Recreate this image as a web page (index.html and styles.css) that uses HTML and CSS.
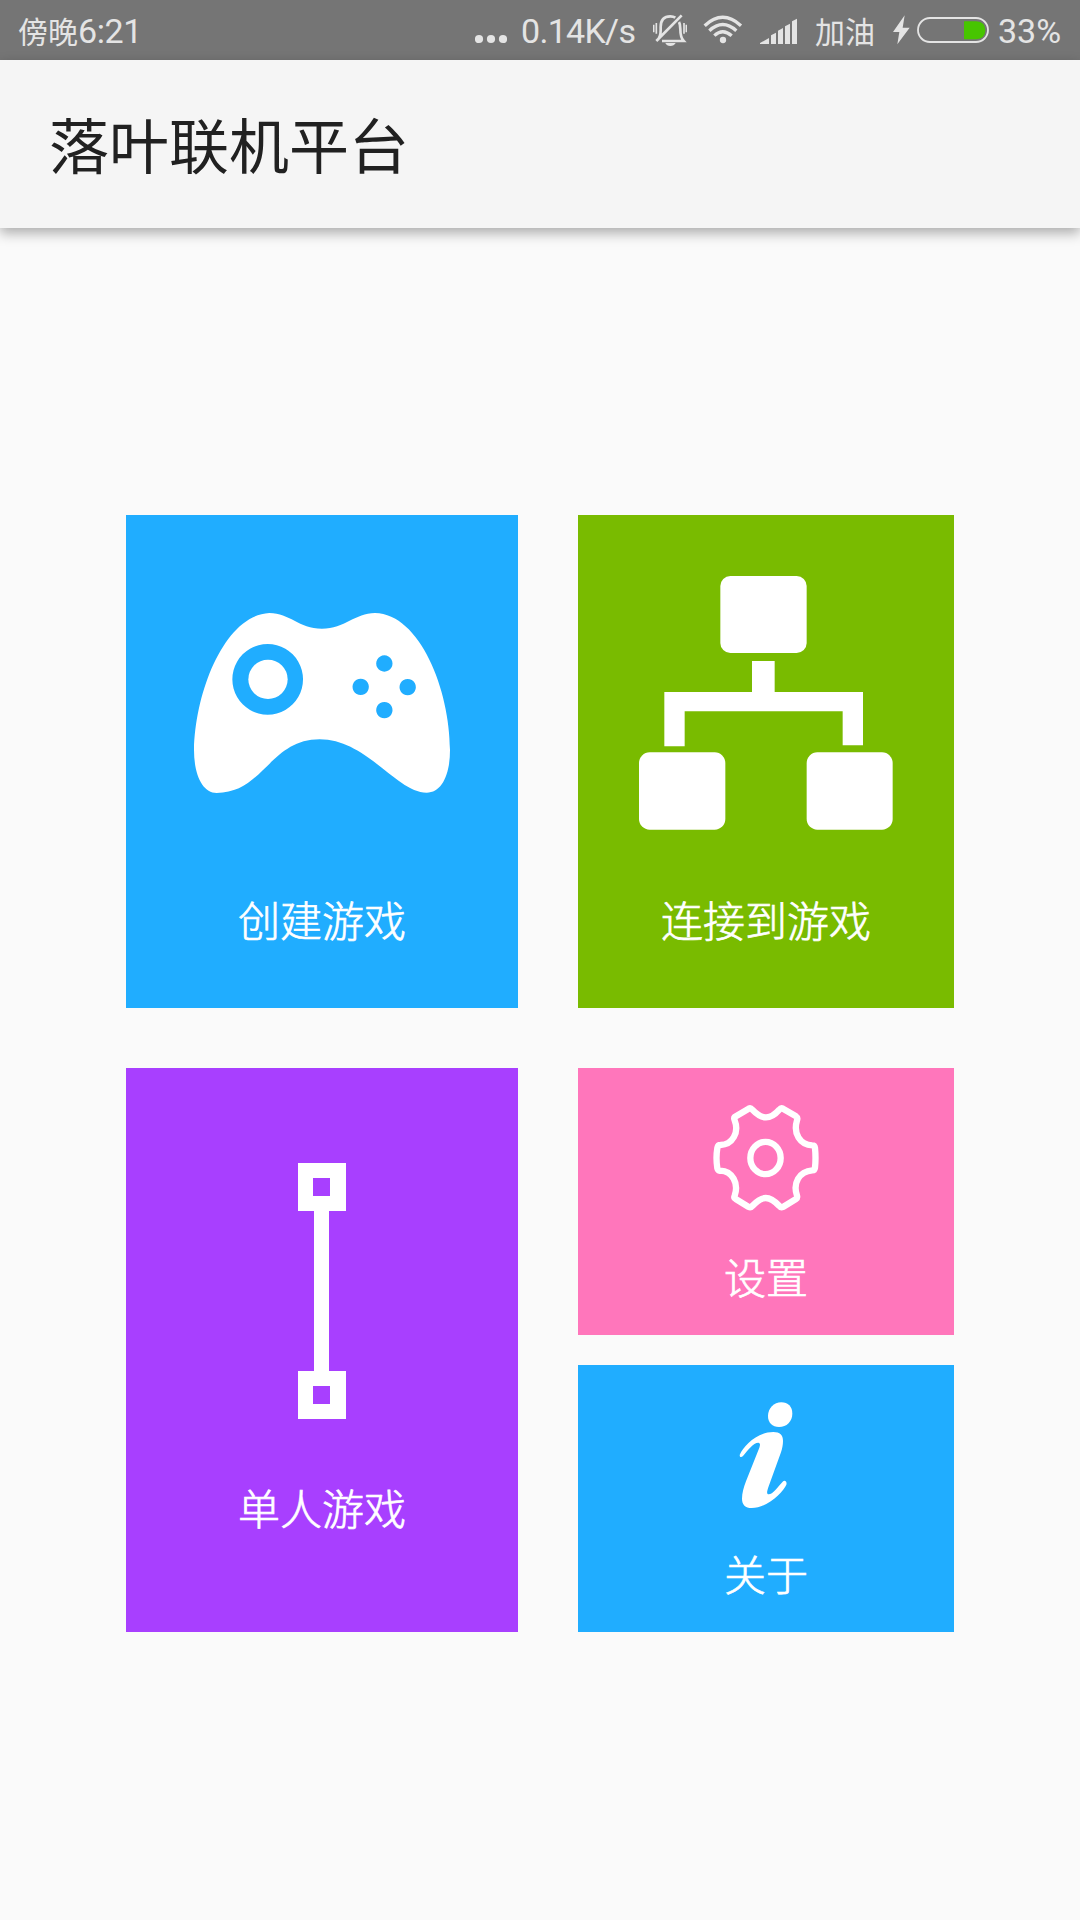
FILE: index.html
```html
<!DOCTYPE html>
<html lang="zh-CN">
<head>
<meta charset="utf-8">
<title>落叶联机平台</title>
<link rel="stylesheet" href="styles.css">
</head>
<body>
<header class="status">
  <div class="clock"><span class="han">傍晚</span><span>6:21</span></div>
  <svg class="dots" viewBox="0 0 32 10"><circle cx="4" cy="5" r="4.1"/><circle cx="16" cy="5" r="4.1"/><circle cx="28" cy="5" r="4.1"/></svg>
  <span class="speed">0.14K/s</span>
  <svg class="bell" viewBox="579 39 102 99">
    <path d="M581 71v23M589 66v32M672 66v32M679 71v23" fill="none" stroke="#e4e4e4" stroke-width="5"/>
    <path d="M594 116Q602 106 602 88V78Q602 46 631 46Q640 46 646 50M657 63Q661 70 661 84Q661 109 671 120H606M589 120L665 43" fill="none" stroke="#e4e4e4" stroke-width="8"/>
    <path d="M616 126H647Q642 135 631 135T616 126Z"/>
  </svg>
  <svg class="wifi" viewBox="729 45 120 87">
    <g fill="none" stroke="#e4e4e4" stroke-width="10"><path d="M734 77Q788 27 843 77M748 92Q788 55 829 92M763 107Q788 83 815 107"/></g>
    <circle cx="789" cy="120" r="9.5"/>
  </svg>
  <svg class="signal" viewBox="0 51 111 81"><path d="M0 129V126L27 111V129ZM33 129V103L48 95V129ZM54 129V89L69 81V129ZM75 129V76L90 68V129ZM96 129V61L111 53V129Z"/></svg>
  <span class="han carrier">加油</span>
  <svg class="bolt" viewBox="399 45 51 90"><path d="M434 46L399 96H418L412 133L449 83H428Z"/></svg>
  <svg class="battery" viewBox="471 51 216 78">
    <rect x="474" y="54" width="210" height="72" rx="36" fill="none" stroke="#e4e4e4" stroke-width="5.5"/>
    <path class="charge" d="M612 64H649Q676 66 676 90.500T649 118H612Z"/>
  </svg>
  <span class="percent">33%</span>
</header>
<div class="appbar"><h1>落叶联机平台</h1></div>
<main class="tiles">
  <a class="tile create">
    <svg class="icon" viewBox="252 225 768 768">
      <path fill-rule="evenodd" d="M478 339C540 339 565 386 636 386C705 386 735 339 795 339C930 342 1020 570 1020 750C1020 825 995 878 950 878C860 878 770 718 629 718C480 718 460 879 320 879C278 879 252 825 252 750C256 570 346 345 478 339ZM473 432a106 106 0 1 0 .1 0ZM823 466a24.500 24.500 0 1 0 .1 0ZM752 536a24.500 24.500 0 1 0 .1 0ZM893 537a24.500 24.500 0 1 0 .1 0ZM823 606a24.500 24.500 0 1 0 .1 0Z"/>
      <circle cx="474" cy="538" r="59"/>
    </svg>
    <span class="label">创建游戏</span>
  </a>
  <a class="tile join">
    <svg class="icon" viewBox="234 225 768 768">
      <rect x="481" y="228" width="259" height="231" rx="30"/>
      <rect x="237" y="757" width="259" height="232" rx="32"/>
      <rect x="740" y="757" width="258" height="232" rx="32"/>
      <path d="M576 483H644V576H909V736H848V634H374V739H313V576H576Z"/>
    </svg>
    <span class="label">连接到游戏</span>
  </a>
  <a class="tile single">
    <svg class="icon" viewBox="0 0 256 256"><path fill-rule="evenodd" d="M104 0H152V48H135V208H152V256H104V208H120V48H104ZM119 15V33H136V15ZM119 223V241H136V223Z"/></svg>
    <span class="label">单人游戏</span>
  </a>
  <div class="stack">
    <a class="tile small settings">
      <svg class="icon" viewBox="459 165 318 318">
        <g fill="none" stroke="#fff" stroke-width="19" stroke-linejoin="round">
          <path d="M524 201L566 176Q572 173 577 179C605 209 630 211 658 179Q663 173 669 176L708 199Q714 203 711 211C699 251 720 285 757 286Q764 286 765 294Q768 324 765 353Q764 361 757 361C717 364 698 400 711 437Q713 444 708 447L669 471Q663 474 658 468C628 436 606 436 577 468Q572 474 566 471L527 447Q521 444 524 437C537 400 517 363 481 362Q474 363 472 355Q467 324 472 294Q474 285 481 285C518 284 538 247 524 211Q521 204 524 201Z"/>
          <ellipse cx="616.500" cy="324" rx="45.500" ry="48.500"/>
        </g>
      </svg>
      <span class="label">设置</span>
    </a>
    <a class="tile small about">
      <svg class="icon" viewBox="459 155 318 318">
        <path d="M664 156C684 156 697 169 697 190C697 213 680 230 657 230C637 230 624 217 624 197C624 174 642 156 664 156Z"/>
        <path d="M540 312C550 288 592 245 640 245C660 245 669 255 669 271C669 283 667 294 663 306L625 411C621 423 619 432 626 432C638 432 654 409 668 394C674 387 682 394 679 403C670 425 622 473 575 473C556 473 546 463 546 445C546 430 551 411 558 393L598 292C601 284 601 278 595 277C580 277 562 301 549 317C543 324 537 319 540 312Z"/>
      </svg>
      <span class="label">关于</span>
    </a>
  </div>
</main>
</body>
</html>
```
FILE: styles.css
```css
* { box-sizing: border-box; }
body {
  margin: 0;
  width: 1080px;
  height: 1920px;
  overflow: hidden;
  background: #fafafa;
  font-family: Roboto, "Noto Sans CJK SC", sans-serif;
}
svg { display: block; flex: none; fill: currentColor; }

.status {
  display: flex;
  align-items: center;
  height: 60px;
  padding: 2px 0 0 18px;
  background: #757575;
  color: #e4e4e4;
  font-size: 34px;
  line-height: 40px;
  white-space: nowrap;
}
.clock { display: flex; align-items: center; width: 457px; letter-spacing: -0.4px; }
.han {
  padding-bottom: 3px;
  font-family: "Noto Sans CJK SC", sans-serif;
  font-size: 30px;
  letter-spacing: 0;
}
.dots { width: 32px; height: 10px; margin: 16px 14px 0 0; }
.speed { width: 132px; letter-spacing: -0.7px; }
.bell { width: 34px; height: 33px; margin: 0 16px 2px 0; }
.wifi { width: 40px; height: 29px; margin: 0 17px 3px 0; }
.signal { width: 37px; height: 27px; margin-right: 18px; }
.carrier { width: 78px; }
.bolt { width: 17px; height: 30px; margin: 0 7px 2px 0; }
.battery { width: 72px; height: 26px; margin: 0 9px 2px 0; }
.charge { fill: #47c500; }

.appbar {
  display: flex;
  align-items: center;
  height: 168px;
  padding: 0 0 3px 49px;
  background: #f5f5f5;
  box-shadow: 0 5px 12px rgba(0, 0, 0, .32);
}
h1 {
  margin: 0;
  color: #212121;
  font: 400 60px/80px "Noto Sans CJK SC", sans-serif;
}

.tiles {
  display: grid;
  grid-template: 493px 564px / 392px 376px;
  gap: 60px;
  padding: 287px 126px 0;
}
.tile {
  display: flex;
  flex-direction: column;
  align-items: center;
  gap: 64px;
  padding-top: 60px;
  color: #fff;
}
.icon { width: 256px; height: 256px; }
.label {
  font: 300 42px/48px "Noto Sans CJK SC", sans-serif;
  -webkit-text-stroke: .7px #fff;
}
.create, .about { background: #20adff; }
.join { background: #79bb00; }
.single { background: #a83fff; padding-top: 95px; }
.settings { background: #ff76bb; }
.stack { display: grid; grid-template-rows: 267px 267px; gap: 30px; }
.small { gap: 41px; padding-top: 37px; }
.small .icon { width: 106px; height: 106px; }
```
